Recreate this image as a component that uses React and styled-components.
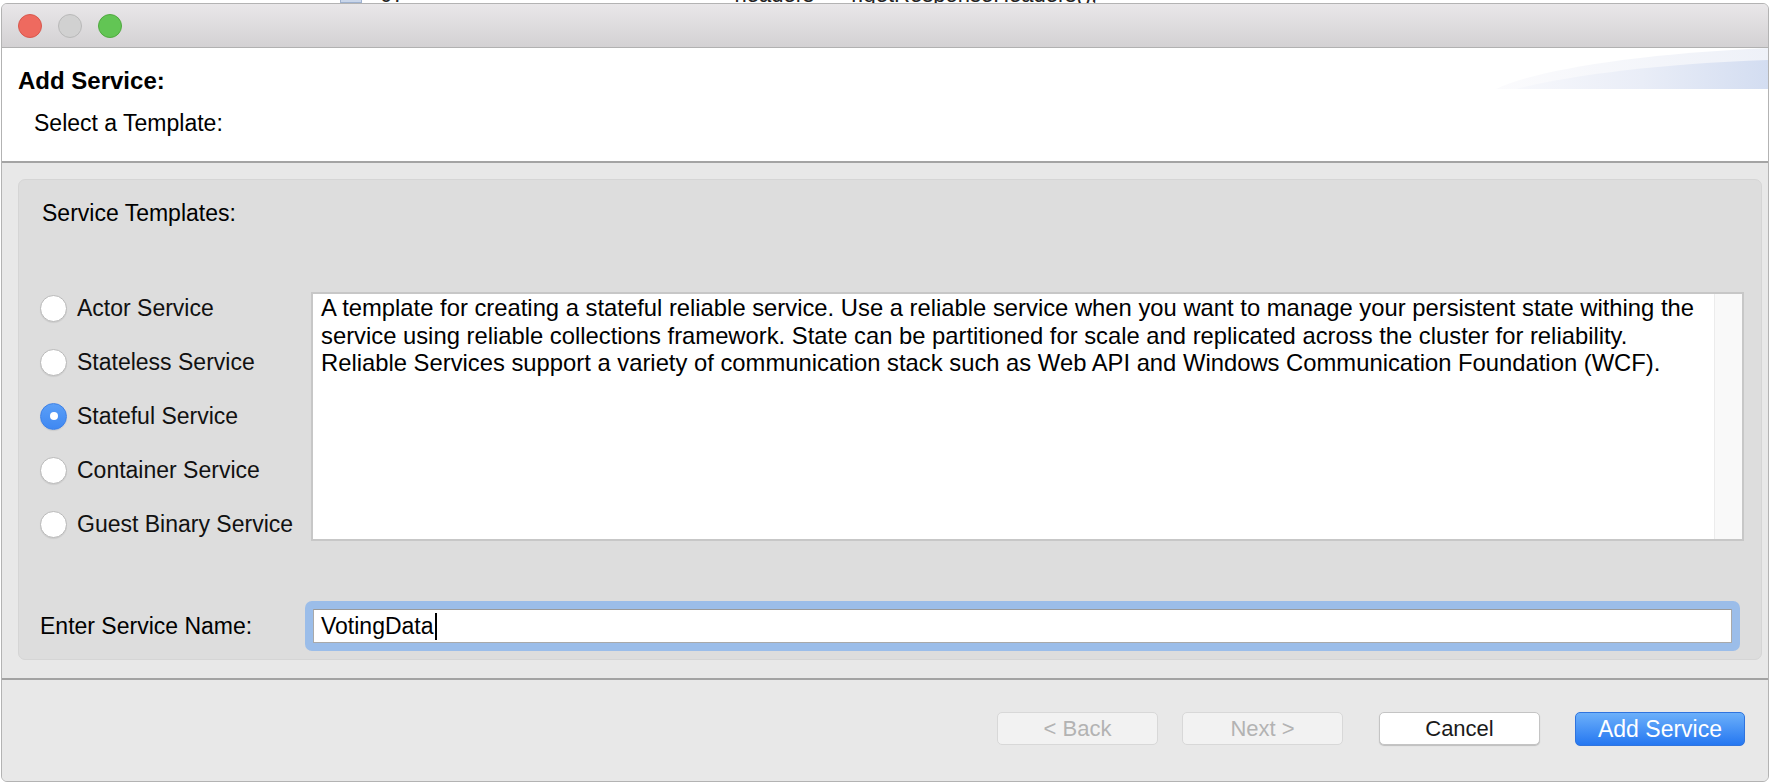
import React from "react";
import styled, { createGlobalStyle } from "styled-components";

const GlobalStyle = createGlobalStyle`
  * { box-sizing: border-box; }
  html, body {
    margin: 0;
    padding: 0;
    background: #ffffff;
    font-family: "Liberation Sans", Arial, sans-serif;
    color: #111111;
  }
`;

const templates = [
  "Actor Service",
  "Stateless Service",
  "Stateful Service",
  "Container Service",
  "Guest Binary Service",
];

const description =
  "A template for creating a stateful reliable service. Use a reliable service when you want to manage your persistent state withing the\n" +
  "service using reliable collections framework. State can be partitioned for scale and replicated across the cluster for reliability.\n" +
  "Reliable Services support a variety of communication stack such as Web API and Windows Communication Foundation (WCF).";

function RadioOption({ label, checked }) {
  return (
    <Option>
      <Radio checked={checked}>{checked && <Dot />}</Radio>
      <OptionLabel>{label}</OptionLabel>
    </Option>
  );
}

function Swoosh() {
  return (
    <SwooshArt width="272" height="41" viewBox="0 0 272 41">
      <defs>
        <linearGradient id="sw1" x1="0" y1="0" x2="1" y2="0">
          <stop offset="0" stopColor="#fbfbfd" />
          <stop offset="1" stopColor="#eef1f8" />
        </linearGradient>
        <linearGradient id="sw2" x1="0" y1="0" x2="1" y2="0">
          <stop offset="0" stopColor="#f7f8fc" />
          <stop offset="0.5" stopColor="#e9edf7" />
          <stop offset="1" stopColor="#d3ddf1" />
        </linearGradient>
      </defs>
      <path d="M0 41 C 40 22, 140 6, 272 0 L272 41 Z" fill="url(#sw1)" />
      <path d="M20 41 C 70 28, 160 16, 272 12 L272 41 Z" fill="url(#sw2)" />
    </SwooshArt>
  );
}

export default function App() {
  return (
    <>
      <GlobalStyle />
      <Backdrop>
        <BackdropIcon />
        <BackdropText $left={18}>07</BackdropText>
        <BackdropText $left={330}>headers_ = r.getResponseHeaders();</BackdropText>
      </Backdrop>
      <Window>
        <TitleBar>
          <Light $bg="#ee6a5f" $border="#d8584d" />
          <Light $bg="#d1d1d1" $border="#b9b9b9" />
          <Light $bg="#62c554" $border="#50a93f" />
        </TitleBar>

        <Header>
          <Swoosh />
          <Title>Add Service:</Title>
          <Subtitle>Select a Template:</Subtitle>
        </Header>

        <Body>
          <Panel>
            <PanelLabel>Service Templates:</PanelLabel>
            <TemplateRow>
              <OptionList>
                {templates.map((t) => (
                  <RadioOption key={t} label={t} checked={t === "Stateful Service"} />
                ))}
              </OptionList>
              <DescriptionBox>
                <DescriptionText>{description}</DescriptionText>
                <ScrollTrack />
              </DescriptionBox>
            </TemplateRow>
            <NameRow>
              <NameLabel>Enter Service Name:</NameLabel>
              <FocusRing>
                <Field>
                  VotingData
                  <Caret />
                </Field>
              </FocusRing>
            </NameRow>
          </Panel>
        </Body>

        <Footer>
          <Button disabled>&lt; Back</Button>
          <Button disabled $gap={24}>Next &gt;</Button>
          <Button $gap={36}>Cancel</Button>
          <PrimaryButton>Add Service</PrimaryButton>
        </Footer>
      </Window>
    </>
  );
}

const Backdrop = styled.div`
  height: 3px;
  overflow: hidden;
  display: flex;
  align-items: flex-end;
  padding-left: 340px;
`;

const BackdropIcon = styled.div`
  width: 22px;
  height: 14px;
  margin-top: -11px;
  background: #c9d6ea;
  border: 1px solid #9eb1cf;
  flex-shrink: 0;
  align-self: flex-start;
`;

const BackdropText = styled.span`
  margin-left: ${(p) => p.$left}px;
  font-family: "Liberation Sans", Arial, sans-serif;
  font-size: 22px;
  line-height: 16px;
  margin-top: -13px;
  align-self: flex-start;
  white-space: nowrap;
  color: #222;
`;

const Window = styled.div`
  width: 1768px;
  height: 779px;
  margin-left: 1px;
  display: flex;
  flex-direction: column;
  border: 1px solid #b3b3b3;
  border-radius: 6px;
  overflow: hidden;
  background: #e8e8e8;
`;

const TitleBar = styled.div`
  height: 44px;
  flex-shrink: 0;
  display: flex;
  align-items: center;
  gap: 16px;
  padding-left: 16px;
  background: linear-gradient(#e9e7e9, #d3d1d3);
  border-bottom: 1px solid #b1b1b1;
`;

const Light = styled.span`
  width: 24px;
  height: 24px;
  border-radius: 50%;
  background: ${(p) => p.$bg};
  border: 1px solid ${(p) => p.$border};
`;

const Header = styled.div`
  position: relative;
  height: 115px;
  flex-shrink: 0;
  background: #ffffff;
  border-bottom: 2px solid #a4a4a4;
  padding: 19px 0 0 16px;
`;

const SwooshArt = styled.svg`
  position: absolute;
  top: 0;
  right: 0;
  display: block;
`;

const Title = styled.div`
  font-size: 24px;
  line-height: 28px;
  font-weight: 700;
  color: #000;
`;

const Subtitle = styled.div`
  margin-top: 14px;
  padding-left: 16px;
  font-size: 23px;
  line-height: 28px;
  color: #000;
`;

const Body = styled.div`
  flex: 1;
  padding: 16px 6px 18px 16px;
  background: #e8e8e8;
  border-bottom: 2px solid #a2a2a2;
`;

const Panel = styled.div`
  height: 481px;
  background: #dddddd;
  border: 1px solid #d5d5d5;
  border-radius: 7px;
  padding: 19px 17px 0 21px;
  display: flex;
  flex-direction: column;
`;

const PanelLabel = styled.div`
  font-size: 23px;
  line-height: 28px;
  padding-left: 2px;
  color: #000;
`;

const TemplateRow = styled.div`
  margin-top: 54px;
  display: flex;
  align-items: flex-start;
  gap: 14px;
`;

const OptionList = styled.div`
  width: 257px;
  display: flex;
  flex-direction: column;
`;

const Option = styled.div`
  height: 54px;
  display: flex;
  align-items: center;
  gap: 10px;
`;

const Radio = styled.span`
  width: 27px;
  height: 27px;
  border-radius: 50%;
  flex-shrink: 0;
  display: flex;
  align-items: center;
  justify-content: center;
  background: ${(p) => (p.checked ? "linear-gradient(#5b9ff7, #3f88f2)" : "#ffffff")};
  border: 1px solid ${(p) => (p.checked ? "#3d80e6" : "#b9b9b9")};
  box-shadow: 0 1px 1px rgba(0, 0, 0, 0.08);
`;

const Dot = styled.span`
  width: 8px;
  height: 8px;
  border-radius: 50%;
  background: #ffffff;
`;

const OptionLabel = styled.span`
  font-size: 23px;
  line-height: 28px;
  color: #111;
  white-space: nowrap;
`;

const DescriptionBox = styled.div`
  flex: 1;
  margin-top: 11px;
  height: 249px;
  display: flex;
  background: #ffffff;
  border: 2px solid #c7c7c7;
`;

const DescriptionText = styled.div`
  flex: 1;
  padding: 0 8px;
  font-size: 23.8px;
  line-height: 27.5px;
  white-space: pre-line;
  color: #000;
`;

const ScrollTrack = styled.div`
  width: 28px;
  flex-shrink: 0;
  background: #f9f9f9;
  border-left: 1px solid #ececec;
`;

const NameRow = styled.div`
  margin-top: 50px;
  display: flex;
  align-items: center;
`;

const NameLabel = styled.div`
  width: 265px;
  font-size: 23px;
  line-height: 28px;
  color: #000;
`;

const FocusRing = styled.div`
  flex: 1;
  margin-right: 4px;
  height: 50px;
  padding: 8px;
  border-radius: 7px;
  background: #9bbde9;
`;

const Field = styled.div`
  height: 34px;
  display: flex;
  align-items: center;
  padding-left: 7px;
  background: #ffffff;
  border: 1px solid #a9a9a9;
  border-top-color: #9a9a9a;
  font-size: 23px;
  color: #000;
`;

const Caret = styled.span`
  width: 2px;
  height: 27px;
  margin-left: 1px;
  background: #000;
`;

const Footer = styled.div`
  flex: 1;
  display: flex;
  justify-content: flex-end;
  align-items: flex-start;
  padding: 32px 23px 0 0;
  background: #e8e8e8;
`;

const Button = styled.button`
  width: 161px;
  height: 33px;
  margin-left: ${(p) => p.$gap || 0}px;
  border-radius: 5px;
  font-family: "Liberation Sans", Arial, sans-serif;
  font-size: 22px;
  padding: 0;
  background: ${(p) => (p.disabled ? "#f2f2f2" : "#ffffff")};
  color: ${(p) => (p.disabled ? "#b3b3b3" : "#1a1a1a")};
  border: 1px solid ${(p) => (p.disabled ? "#d8d8d8" : "#c4c4c4")};
  box-shadow: ${(p) => (p.disabled ? "none" : "0 1px 1px rgba(0,0,0,0.18)")};
`;

const PrimaryButton = styled.button`
  width: 170px;
  height: 34px;
  margin-left: 35px;
  border-radius: 5px;
  font-family: "Liberation Sans", Arial, sans-serif;
  font-size: 23px;
  padding: 0;
  color: #ffffff;
  background: linear-gradient(#6cb0fa, #2577f1);
  border: 1px solid #2f74de;
`;
